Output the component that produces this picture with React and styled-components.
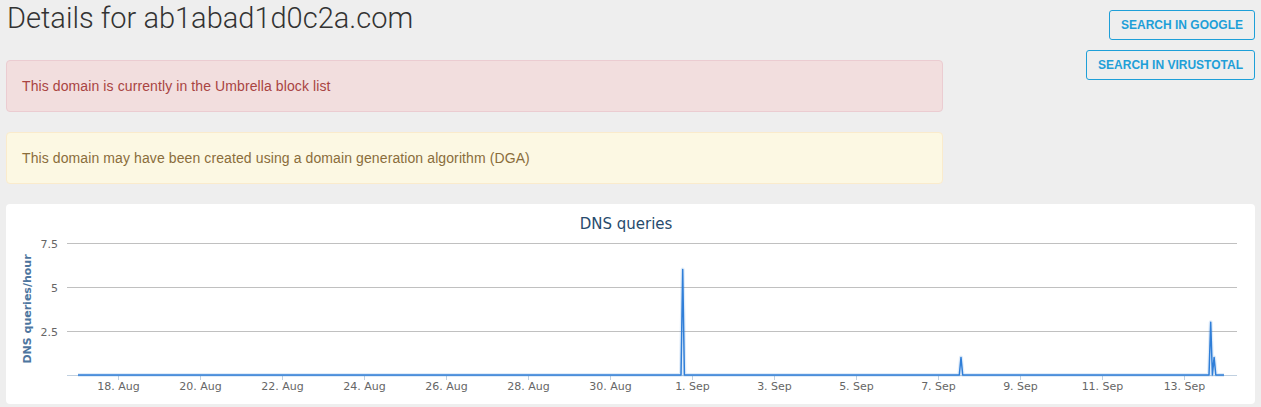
import React from 'react';
import styled, { createGlobalStyle } from 'styled-components';

const GlobalStyle = createGlobalStyle`
  * { box-sizing: border-box; }
  html, body {
    margin: 0;
    padding: 0;
    background: #eeeeee;
    font-family: "Liberation Sans", Arial, sans-serif;
    font-size: 14px;
    color: #333;
  }
`;

const PLOT_LEFT = 61;
const PLOT_RIGHT = 1231;
const BASE_Y = 171;
const UNIT = 17.6;
const FIRST_TICK = 112;
const DAY = 41;

const ticks = [
  '18. Aug', '20. Aug', '22. Aug', '24. Aug', '26. Aug', '28. Aug', '30. Aug',
  '1. Sep', '3. Sep', '5. Sep', '7. Sep', '9. Sep', '11. Sep', '13. Sep',
];

const grid = [
  { v: 7.5, label: '7.5' },
  { v: 5, label: '5' },
  { v: 2.5, label: '2.5' },
];

// hourly samples, only the non-zero ones matter
const series = [
  [72, 0], [675, 0], [676.7, 6], [678.4, 0],
  [953.3, 0], [955, 1], [956.7, 0],
  [1203, 0], [1204.7, 3], [1206.4, 0], [1208.1, 1], [1209.8, 0],
  [1218, 0],
];

const yOf = (v) => BASE_Y - v * UNIT;

export default function App() {
  const path = series
    .map(([x, v], i) => `${i ? 'L' : 'M'}${x} ${yOf(v).toFixed(1)}`)
    .join(' ');

  return (
    <>
      <GlobalStyle />
      <Page>
        <TopRow>
          <Main>
            <Title>Details for ab1abad1d0c2a.com</Title>
            <Alert $tone="danger">This domain is currently in the Umbrella block list</Alert>
            <Alert $tone="warning">
              This domain may have been created using a domain generation algorithm (DGA)
            </Alert>
          </Main>
          <Actions>
            <OutlineButton>Search in Google</OutlineButton>
            <OutlineButton>Search in VirusTotal</OutlineButton>
          </Actions>
        </TopRow>

        <ChartCard>
          <svg width="1249" height="200" viewBox="0 0 1249 200">
            <ChartTitle x="620" y="25" textAnchor="middle">DNS queries</ChartTitle>
            <AxisTitle transform="translate(25 105) rotate(-90)" textAnchor="middle">
              DNS queries/hour
            </AxisTitle>

            {grid.map((g) => (
              <g key={g.label}>
                <line x1={PLOT_LEFT} x2={PLOT_RIGHT} y1={yOf(g.v) + 0.5} y2={yOf(g.v) + 0.5} stroke="#c0c0c0" strokeWidth="1" />
                <AxisLabel x="52" y={yOf(g.v) + 5} textAnchor="end">{g.label}</AxisLabel>
              </g>
            ))}

            <line x1={PLOT_LEFT} x2={PLOT_RIGHT} y1={BASE_Y + 0.5} y2={BASE_Y + 0.5} stroke="#c0d0e0" strokeWidth="1" />
            {ticks.map((t, i) => {
              const x = FIRST_TICK + i * DAY * 2 + 0.5;
              return (
                <g key={t}>
                  <line x1={x} x2={x} y1={BASE_Y} y2={BASE_Y + 5} stroke="#c0d0e0" strokeWidth="1" />
                  <AxisLabel x={x} y="186" textAnchor="middle">{t}</AxisLabel>
                </g>
              );
            })}

            <path d={path} fill="none" stroke="#2f7ed8" strokeOpacity="0.15" strokeWidth="4" strokeLinejoin="round" />
            <path d={path} fill="none" stroke="#2f7ed8" strokeWidth="1.5" strokeLinejoin="round" />
          </svg>
        </ChartCard>
      </Page>
    </>
  );
}

const Page = styled.div`
  padding: 0 6px;
`;

const TopRow = styled.div`
  display: flex;
`;

const Main = styled.div`
  width: 937px;
  flex: none;
`;

const Actions = styled.div`
  flex: 1;
  display: flex;
  flex-direction: column;
  align-items: flex-end;
  gap: 10px;
  padding-top: 10px;
`;

const Title = styled.h1`
  margin: 0 0 24px;
  font-family: Roboto, "Liberation Sans", sans-serif;
  font-weight: 300;
  font-size: 29px;
  line-height: 36px;
  color: #333;
  padding-left: 1px;
`;

const tones = {
  danger: { bg: '#f2dede', border: '#ebccd1', color: '#a94442' },
  warning: { bg: '#fcf8e3', border: '#faebcc', color: '#8a6d3b' },
};

const Alert = styled.div`
  padding: 15px;
  margin-bottom: 20px;
  line-height: 20px;
  letter-spacing: 0.1px;
  border: 1px solid ${(p) => tones[p.$tone].border};
  border-radius: 4px;
  background: ${(p) => tones[p.$tone].bg};
  color: ${(p) => tones[p.$tone].color};
`;

const OutlineButton = styled.button`
  height: 30px;
  padding: 0 11px;
  background: transparent;
  border: 1px solid #1e9fd8;
  border-radius: 3px;
  color: #1e9fd8;
  font-family: "Liberation Sans", Arial, sans-serif;
  font-weight: 700;
  font-size: 12px;
  text-transform: uppercase;
  cursor: pointer;
`;

const ChartCard = styled.div`
  background: #fff;
  border-radius: 4px;
  height: 200px;
  overflow: hidden;

  svg { display: block; }
`;

const ChartTitle = styled.text`
  font-family: "DejaVu Sans", Verdana, sans-serif;
  font-size: 15px;
  fill: #274b6d;
`;

const AxisTitle = styled.text`
  font-family: "DejaVu Sans", Verdana, sans-serif;
  font-size: 11px;
  font-weight: 700;
  fill: #4d759e;
`;

const AxisLabel = styled.text`
  font-family: "DejaVu Sans", Verdana, sans-serif;
  font-size: 11px;
  fill: #666;
`;
